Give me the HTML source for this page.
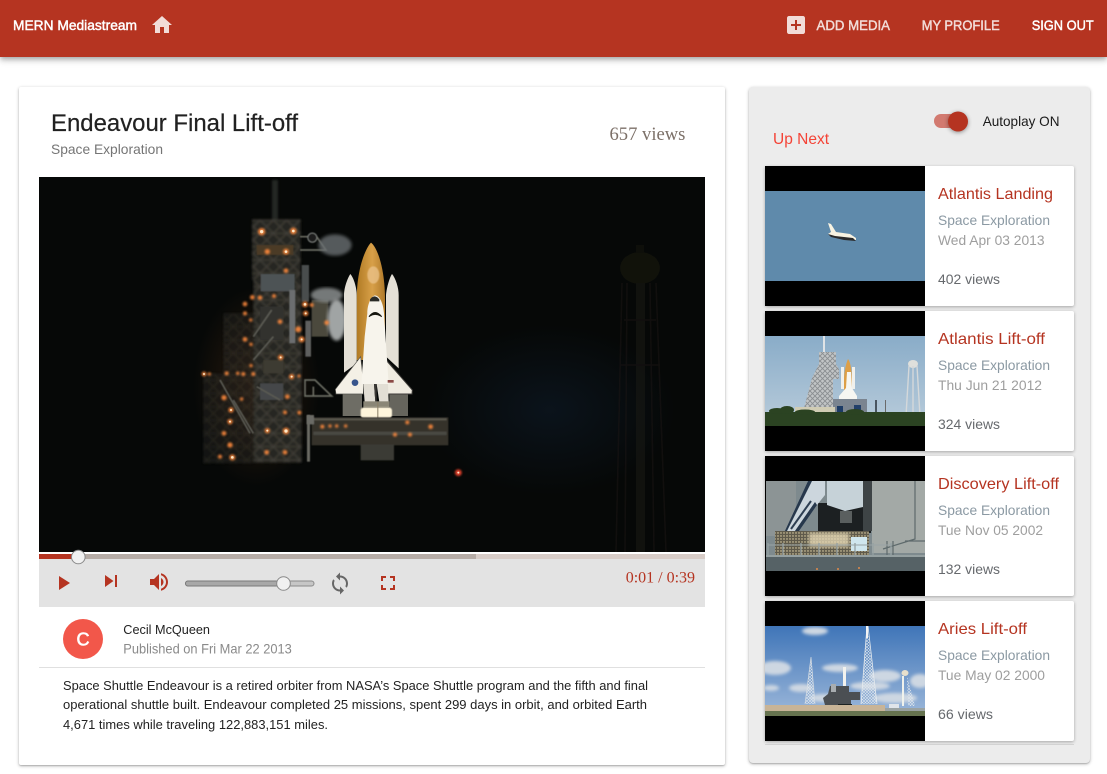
<!DOCTYPE html>
<html lang="en"><head><meta charset="utf-8"><title>MERN Mediastream</title>
<style>
html,body{margin:0;padding:0;background:#fff;width:1107px;height:774px;overflow:hidden;font-family:"Liberation Sans",sans-serif}
.a{position:absolute}
#bar{left:0;top:0;width:1107px;height:57px;background:#b53421;box-shadow:0 2px 4px -1px rgba(0,0,0,.2),0 4px 5px 0 rgba(0,0,0,.14),0 1px 10px 0 rgba(0,0,0,.12)}
#main{left:19px;top:87px;width:706px;height:678px;background:#fff;border-radius:2px;box-shadow:0 1px 3px rgba(0,0,0,.3),0 1px 1px rgba(0,0,0,.12)}
#side{left:749px;top:87px;width:341px;height:676px;background:#ececec;border-radius:4px;box-shadow:0 1px 3px rgba(0,0,0,.3),0 1px 1px rgba(0,0,0,.12)}
.card{left:765px;width:309px;height:140px;background:#fff;border-radius:2px;box-shadow:0 1px 3px rgba(0,0,0,.3)}
svg{position:absolute;left:0;top:0}
text{font-family:"Liberation Sans",sans-serif;white-space:pre}
.h{font-size:14px;font-weight:400;stroke-width:.45px;paint-order:stroke}
.tt{font-size:16px;fill:#b53421}
.s{font-size:14px;fill:#8b99a3}
.d{font-size:14px;fill:#9e9e9e}
.v{font-size:14px;fill:#66696d}
.p{font-size:13px;fill:#222}
</style></head><body>
<div class="a" id="bar"></div>
<div class="a" id="main"></div>
<div class="a" id="side"></div>
<div class="a" style="left:765px;top:744px;width:309px;height:1px;background:#d6d6d6"></div>
<div class="a card" style="top:166px"></div>
<div class="a card" style="top:311px"></div>
<div class="a card" style="top:456px"></div>
<div class="a card" style="top:601px"></div>

<svg width="1107" height="774" viewBox="0 0 1107 774" xmlns="http://www.w3.org/2000/svg">
<defs>
<filter id="b1"><feGaussianBlur stdDeviation="1.600"/></filter>
<filter id="b2"><feGaussianBlur stdDeviation="5"/></filter>
<filter id="b5"><feGaussianBlur stdDeviation="3.500"/></filter>
<filter id="b4" x="-300%" y="-300%" width="700%" height="700%"><feGaussianBlur stdDeviation="3"/></filter>
<filter id="t1"><feGaussianBlur stdDeviation=".35"/></filter>
<linearGradient id="et" x1="0" y1="0" x2="1" y2="0"><stop offset="0" stop-color="#b07a24"/><stop offset=".55" stop-color="#d8a048"/><stop offset="1" stop-color="#b07a2a"/></linearGradient>
<linearGradient id="sk2" x1="0" y1="0" x2="0" y2="1"><stop offset="0" stop-color="#89acc8"/><stop offset="1" stop-color="#b9ccdb"/></linearGradient>
<linearGradient id="sk4" x1="0" y1="0" x2="0" y2="1"><stop offset="0" stop-color="#3f75b8"/><stop offset="1" stop-color="#9db8da"/></linearGradient>
<radialGradient id="haze"><stop offset="0" stop-color="#0d1824" stop-opacity=".7"/><stop offset="1" stop-color="#0d1824" stop-opacity="0"/></radialGradient>
<radialGradient id="warm"><stop offset="0" stop-color="#4a2c14" stop-opacity=".55"/><stop offset="1" stop-color="#4a2c14" stop-opacity="0"/></radialGradient>
<pattern id="lat" width="40" height="40" patternUnits="userSpaceOnUse"><rect width="40" height="40" fill="#282723"/><path d="M0 0L40 40M40 0L0 40M0 20H40" stroke="#403e37" stroke-width="4"/></pattern>
<pattern id="lat2" width="5" height="5" patternUnits="userSpaceOnUse"><rect width="5" height="5" fill="#c2c5c6"/><path d="M0 0L5 5M5 0L0 5" stroke="#8a8e91" stroke-width=".9"/></pattern>
<pattern id="lat3" width="3" height="3" patternUnits="userSpaceOnUse"><path d="M0 0L3 3M3 0L0 3" stroke="#dfe6ee" stroke-width=".55"/></pattern>
<pattern id="sp" width="3" height="3" patternUnits="userSpaceOnUse"><rect width="3" height="3" fill="#5e5a4c"/><circle cx="1" cy="1" r=".7" fill="#ebdcae"/></pattern>
</defs>

<!-- main video -->
<svg x="39" y="177" width="666" height="375" viewBox="39 177 666 375">
<rect x="39" y="177" width="666" height="375" fill="#060807"/>
<ellipse cx="550" cy="410" rx="125" ry="85" fill="url(#haze)"/>
<!-- water tower -->
<g opacity=".5" filter="url(#t1)">
<ellipse cx="640" cy="268" rx="20" ry="16" fill="#1a1a0e"/>
<rect x="636" y="245" width="8" height="8" fill="#14140d"/>
<rect x="636" y="283" width="9" height="270" fill="#1b1b19"/>
<path d="M622 283L616 552M656 283L666 552M627 283L625 552M650 283L654 552M624 320H656M620 365H660" stroke="#1f1815" stroke-width="1.500" fill="none"/>
</g>
<g transform="translate(200 200) scale(.33333)">
<!-- pad tower -->
<ellipse cx="170" cy="560" rx="190" ry="300" fill="url(#warm)"/>
<g filter="url(#b5)">
<rect x="216" y="-60" width="18" height="120" fill="#2a2e2a" opacity=".8"/>
<rect x="156" y="58" width="146" height="180" fill="url(#lat)"/>
<rect x="160" y="238" width="145" height="550" fill="url(#lat)"/>
<rect x="10" y="520" width="150" height="270" fill="url(#lat)" opacity=".45"/>
<rect x="70" y="340" width="90" height="190" fill="url(#lat)" opacity=".45"/>
</g>
<g filter="url(#b1)">
<rect x="182" y="222" width="102" height="52" fill="#4e5254"/>
<rect x="268" y="270" width="18" height="160" fill="#6c6e70"/>
<rect x="180" y="320" width="70" height="100" fill="#33332f"/>
<rect x="180" y="550" width="70" height="50" fill="#44464a"/>
<rect x="190" y="480" width="60" height="40" fill="#3d3a30"/>
<rect x="305" y="195" width="22" height="110" fill="#4a4d4d"/>
<rect x="316" y="362" width="17" height="108" fill="#5e605e"/>
<rect x="335" y="300" width="50" height="110" fill="#4c4a3c"/>
<path d="M160 410L215 330M160 480L220 410M170 560L240 600M100 600L160 700M60 540L150 700" stroke="#5a5a52" stroke-width="5" fill="none"/>
<path d="M300 110H350L378 150H300M315 540H345L395 588H315ZM340 560V590" stroke="#6a6c62" stroke-width="5" fill="none"/>
<rect x="170" y="135" width="110" height="30" fill="#4c3a26"/>
<rect x="321" y="645" width="9" height="140" fill="#6a6a64"/>
<circle cx="337" cy="113" r="14" fill="#1b1d1c" stroke="#7c7f7c" stroke-width="3"/>
</g>
<!-- smoke -->
<ellipse cx="405" cy="135" rx="50" ry="32" fill="#6a6f72" filter="url(#b2)" opacity=".8"/>
<ellipse cx="380" cy="285" rx="48" ry="22" fill="#8a8e8e" filter="url(#b2)" opacity=".85"/>
<ellipse cx="410" cy="360" rx="28" ry="62" fill="#b2b6b6" filter="url(#b2)" opacity=".9"/>
<!-- shuttle -->
<g filter="url(#t1)">
<path d="M470 300C470 200 500 140 513 128C530 140 555 200 555 300V480H470Z" fill="url(#et)"/>
<ellipse cx="520" cy="225" rx="18" ry="26" fill="#ecc48c" opacity=".75" filter="url(#b1)"/>
<path d="M432 285C432 260 445 230 451 222C460 232 470 260 470 285V490L432 518Z" fill="#e4e0d6"/>
<path d="M558 285C560 260 570 230 576 222C585 232 596 260 596 285V505L558 470Z" fill="#e4e0d6"/>
<rect x="428" y="578" width="58" height="70" fill="#6e6d65"/>
<rect x="568" y="578" width="56" height="70" fill="#66655d"/>
<path d="M482 470L406 568L408 582H490V545Z" fill="#f4f0e6" stroke="#55544f" stroke-width="2"/>
<path d="M558 480L637 570L636 582H556V545Z" fill="#efebe0" stroke="#3f3e3a" stroke-width="3"/>
<path d="M502 340C502 310 515 288 525 286C540 288 550 310 552 340L566 552H484L494 410Z" fill="#f7f4ec"/>
<path d="M510 298Q523 280 538 298L538 304H510Z" fill="#2c2c28"/>
<path d="M507 350Q525 325 545 350L542 348Q525 338 510 348Z" fill="#15130f" stroke="#15130f" stroke-width="3"/>
<circle cx="465" cy="548" r="10" fill="#37558c"/>
<rect x="563" y="540" width="18" height="8" fill="#8b4a44"/>
<path d="M490 552H522L526 606H494ZM530 552H564L566 606H538Z" fill="#e2ded4"/>
<path d="M522 552H530V606H526Z" fill="#3a3934"/>
<rect x="490" y="604" width="78" height="18" fill="#8a8676"/>
<rect x="482" y="622" width="94" height="33" rx="10" fill="#fff6dc" filter="url(#b1)"/>
<rect x="532" y="606" width="3" height="48" fill="#8a7f66"/>
</g>
<!-- platform -->
<g filter="url(#b1)">
<rect x="335" y="652" width="410" height="84" fill="#34322c"/>
<rect x="335" y="655" width="405" height="6" fill="#5a584e"/>
<rect x="340" y="695" width="400" height="10" fill="#4a4942"/>
<rect x="482" y="733" width="100" height="48" fill="#3a3b34"/>
<rect x="320" y="645" width="22" height="28" fill="#6a6a65"/>
</g>
<!-- lights -->
<g fill="#ff8a3c" filter="url(#b4)" opacity=".9">
<circle cx="185" cy="95" r="11"/><circle cx="280" cy="93" r="10"/><circle cx="202" cy="155" r="8"/><circle cx="258" cy="155" r="9"/><circle cx="258" cy="212" r="7"/><circle cx="157" cy="292" r="7"/><circle cx="180" cy="293" r="7"/><circle cx="222" cy="288" r="6"/><circle cx="135" cy="312" r="7"/><circle cx="135" cy="340" r="6"/><circle cx="152" cy="360" r="5"/><circle cx="240" cy="365" r="7"/><circle cx="315" cy="313" r="9"/><circle cx="335" cy="315" r="6"/><circle cx="317" cy="340" r="8"/><circle cx="295" cy="388" r="9"/><circle cx="135" cy="418" r="7"/><circle cx="305" cy="418" r="9"/><circle cx="153" cy="433" r="5"/><circle cx="242" cy="472" r="8"/><circle cx="153" cy="497" r="5"/><circle cx="12" cy="522" r="7"/><circle cx="28" cy="522" r="5"/><circle cx="80" cy="520" r="6"/><circle cx="113" cy="520" r="5"/><circle cx="130" cy="522" r="6"/><circle cx="160" cy="522" r="6"/><circle cx="275" cy="530" r="8"/><circle cx="297" cy="528" r="5"/><circle cx="72" cy="593" r="8"/><circle cx="125" cy="597" r="5"/><circle cx="262" cy="590" r="7"/><circle cx="93" cy="630" r="8"/><circle cx="255" cy="637" r="6"/><circle cx="298" cy="638" r="6"/><circle cx="90" cy="665" r="8"/><circle cx="72" cy="700" r="7"/><circle cx="202" cy="692" r="8"/><circle cx="258" cy="693" r="10"/><circle cx="90" cy="735" r="8"/><circle cx="60" cy="770" r="6"/><circle cx="97" cy="772" r="9"/><circle cx="200" cy="757" r="7"/><circle cx="255" cy="757" r="7"/><circle cx="367" cy="680" r="6"/><circle cx="390" cy="678" r="5"/><circle cx="410" cy="678" r="5"/><circle cx="437" cy="678" r="5"/><circle cx="622" cy="667" r="6"/><circle cx="692" cy="680" r="7"/><circle cx="585" cy="704" r="6"/><circle cx="630" cy="704" r="6"/><circle cx="775" cy="818" r="10" fill="#ff4a30"/><circle cx="380" cy="368" r="7"/>
</g>
<g fill="#ffe9c8">
<circle cx="185" cy="95" r="5"/><circle cx="280" cy="93" r="4"/><circle cx="258" cy="155" r="4"/><circle cx="315" cy="313" r="4"/><circle cx="317" cy="340" r="3"/><circle cx="305" cy="418" r="3"/><circle cx="258" cy="693" r="5"/><circle cx="97" cy="772" r="4"/><circle cx="202" cy="692" r="3"/><circle cx="93" cy="630" r="3"/><circle cx="90" cy="665" r="3"/><circle cx="275" cy="530" r="3"/><circle cx="242" cy="472" r="3"/><circle cx="12" cy="522" r="3"/><circle cx="775" cy="818" r="3"/>
</g>
</g>
</svg>

<!-- thumb 1 -->
<rect x="765" y="166" width="160" height="140" fill="#000"/>
<svg x="765" y="191" width="160" height="90" viewBox="0 0 160 90">
<rect width="160" height="90" fill="#5f8aab"/>
<g filter="url(#t1)">
<path d="M63 32L66 33L71 41L85 43L91 47L91 49L79 48L66 45L63 43L66 41Z" fill="#f8f3e2"/>
<path d="M63 43L66 46L79 49L91 50L88 47L70 45Z" fill="#2a2a2c"/>
</g>
</svg>
<!-- thumb 2 -->
<rect x="765" y="311" width="160" height="140" fill="#000"/>
<svg x="765" y="336" width="160" height="90" viewBox="0 0 160 90">
<rect width="160" height="90" fill="url(#sk2)"/>
<g filter="url(#t1)">
<rect x="58" y="0" width="2" height="16" fill="#dfe3e6"/>
<path d="M54 16H71V28L74 33V43H68V76H38L47 42L54 28Z" fill="url(#lat2)"/>
<path d="M79 44C79 34 82 25 83 23C85 25 87 34 87 44V56H79Z" fill="#dd9f47"/>
<rect x="76" y="31" width="3" height="22" fill="#f0f0ec"/><rect x="87" y="31" width="3" height="22" fill="#f0f0ec"/>
<path d="M82 36H86L87 52L92 60V64H74V60L81 52Z" fill="#f6f6f2"/>
<rect x="68" y="63" width="34" height="13" fill="#7a8490"/>
<rect x="72" y="70" width="6" height="6" fill="#1e3a66"/><rect x="89" y="69" width="7" height="7" fill="#23416a"/>
<ellipse cx="148" cy="28" rx="5" ry="4" fill="#dfe0dc"/>
<path d="M144 30L141 80M152 30L155 80M148 30V80" stroke="#d4d8da" stroke-width="1.400" fill="none"/>
<rect x="110" y="64" width="2" height="12" fill="#4a5460"/><rect x="120" y="64" width="1" height="12" fill="#6a6a6a"/>
</g>
<path d="M30 71H70V76H30ZM104 76H130V79H104Z" fill="#d0ccb4"/>
<g fill="#2b4322">
<rect y="76" width="160" height="14"/>
<ellipse cx="12" cy="75" rx="8" ry="3"/><ellipse cx="22" cy="74" rx="7" ry="4"/><ellipse cx="40" cy="76" rx="10" ry="2.500"/><ellipse cx="90" cy="76" rx="9" ry="3"/><ellipse cx="140" cy="78" rx="14" ry="2"/>
</g>
</svg>
<!-- thumb 3 -->
<rect x="765" y="456" width="160" height="140" fill="#000"/>
<svg x="765" y="481" width="160" height="90" viewBox="0 0 160 90">
<rect x="1" width="159" height="90" fill="#7e8a8e"/>
<rect x="1" width="30" height="55" fill="#8c9495"/>
<path d="M107 0H160V72H107Z" fill="#a3a9a6"/>
<path d="M53 22H106V52H53Z" fill="#1c2022"/>
<path d="M62 0H98V26L80 30L62 24Z" fill="#c6d2d8"/>
<rect x="75" y="30" width="12" height="12" fill="#5a5f5f"/>
<path d="M98 0H107V50H98Z" fill="#3e4446"/>
<path d="M43 0H60V14L52 24L23 66L18 54Z" fill="#ccd6dd"/>
<path d="M43 0L18 54L23 66L52 24L50 21L23 60L21 52L47 0Z" fill="#27384c"/>
<path d="M26 48L46 20" stroke="#2d3e52" stroke-width="2"/>
<path d="M10 50H104V76H10Z" fill="url(#sp)" filter="url(#t1)"/>
<path d="M44 52H84V66H44Z" fill="#e6d9b6" opacity=".75" filter="url(#b1)"/>
<rect x="86" y="56" width="16" height="14" fill="#cfe6ee"/>
<path d="M150 0V58L118 68M140 60H160M122 60V74M128 60V74" stroke="#5e6a6c" stroke-width="1.200" fill="none"/>
<rect x="1" y="74" width="159" height="16" fill="#566266"/>
<rect x="1" y="74" width="159" height="2" fill="#95a0a1"/>
<path d="M3 62V76M18 62V76M36 62V76M54 62V76M72 62V76M90 62V76M108 62V76M126 62V76" stroke="#94a0a2" stroke-width="1.300"/>
<path d="M3 64H125" stroke="#9aa4a6"/>
<circle cx="52" cy="88" r="1" fill="#e08a4a"/><circle cx="73" cy="88" r="1" fill="#e08a4a"/><circle cx="94" cy="87" r="1" fill="#e08a4a"/>
</svg>
<!-- thumb 4 -->
<rect x="765" y="601" width="160" height="140" fill="#000"/>
<svg x="765" y="626" width="160" height="90" viewBox="0 0 160 90">
<rect width="160" height="90" fill="url(#sk4)"/>
<g filter="url(#b1)" fill="#cdd7e2">
<ellipse cx="50" cy="5" rx="13" ry="4"/><ellipse cx="10" cy="42" rx="16" ry="7"/><ellipse cx="36" cy="62" rx="12" ry="4"/><ellipse cx="75" cy="42" rx="18" ry="4"/><ellipse cx="120" cy="50" rx="16" ry="6"/><ellipse cx="155" cy="55" rx="10" ry="7"/><ellipse cx="105" cy="60" rx="20" ry="4"/><ellipse cx="6" cy="62" rx="8" ry="3"/><ellipse cx="60" cy="72" rx="16" ry="4"/><ellipse cx="130" cy="72" rx="22" ry="5"/>
</g>
<g filter="url(#t1)">
<path d="M102 0L96 78H112Z" fill="url(#lat3)"/>
<path d="M102 0L96 78M103 0L112 78" stroke="#e6ebef" stroke-width=".8"/>
<rect x="101" y="0" width="2" height="12" fill="#f2f3f4"/>
<path d="M46 31L40 78H50Z" fill="url(#lat3)"/>
<path d="M46 31L40 78M46 31L50 78" stroke="#d6dce2" stroke-width=".7"/>
<rect x="78" y="41" width="3" height="24" fill="#f2f2ee"/>
<path d="M65 60H84V66H95V74H86V79H60L58 72L63 68Z" fill="#4c5052"/>
<rect x="66" y="58" width="5" height="8" fill="#a8adb0"/>
<ellipse cx="140" cy="47" rx="3.500" ry="3" fill="#e8e0cc"/>
<rect x="137" y="50" width="2" height="30" fill="#f0f2ec"/>
<path d="M142 50L150 80H143Z" fill="url(#lat3)"/>
<rect x="73" y="78" width="14" height="6" fill="#1c2024"/>
<rect x="124" y="78" width="10" height="6" fill="#dfe4ea"/>
</g>
<rect y="79" width="120" height="6" fill="#c8b497"/>
<rect y="85" width="160" height="5" fill="#66734f"/>
<rect x="120" y="82" width="40" height="3" fill="#9aa2a2"/>
</svg>

<!-- header icons -->
<path transform="translate(150 13)" fill="#f2dcd8" d="M10 20v-6h4v6h5v-8h3L12 3 2 12h3v8z"/>
<path transform="translate(784 13)" fill="#f2dcd8" d="M19 3H5c-1.110 0-2 .9-2 2v14c0 1.100.89 2 2 2h14c1.100 0 2-.9 2-2V5c0-1.100-.9-2-2-2zm-2 10h-4v4h-2v-4H7v-2h4V7h2v4h4v2z"/>

<!-- header text -->
<text x="13" y="30" class="h" fill="#fff" stroke="#fff" textLength="124" lengthAdjust="spacingAndGlyphs">MERN Mediastream</text>
<text x="816.500" y="30" class="h" fill="#f2dcd8" stroke="#f2dcd8" textLength="73.500" lengthAdjust="spacingAndGlyphs">ADD MEDIA</text>
<text x="921.700" y="30" class="h" fill="#f2dcd8" stroke="#f2dcd8" textLength="78" lengthAdjust="spacingAndGlyphs">MY PROFILE</text>
<text x="1031.700" y="30" class="h" fill="#fff" stroke="#fff" textLength="62" lengthAdjust="spacingAndGlyphs">SIGN OUT</text>

<!-- main text -->
<text x="51" y="131" font-size="24" fill="#212121" stroke="#212121" stroke-width=".2" textLength="247" lengthAdjust="spacingAndGlyphs">Endeavour Final Lift-off</text>
<text x="51" y="154" font-size="14" fill="#757575" textLength="112" lengthAdjust="spacingAndGlyphs">Space Exploration</text>
<text x="609.500" y="140" font-size="18.600" fill="#7c7068" style="font-family:'Liberation Serif',serif">657 views</text>

<!-- controls -->
<rect x="39" y="552" width="666" height="55" fill="#e3e3e3"/>
<rect x="39" y="552" width="666" height="2" fill="#fff"/>
<rect x="39" y="554" width="666" height="5" fill="#d8cdc8"/>
<rect x="39" y="554" width="437" height="5" fill="#b6aca6"/>
<rect x="39" y="554" width="39" height="5" fill="#b53421"/>
<circle cx="78.300" cy="557" r="6.800" fill="#f1f1f1" stroke="#8a8a8a" stroke-width="1"/>
<path transform="translate(51 571)" fill="#b53421" d="M8 5v14l11-7z"/>
<path transform="translate(99 569)" fill="#b53421" d="M6 18l8.500-6L6 6v12zM16 6v12h2V6h-2z"/>
<path transform="translate(147 570)" fill="#b53421" d="M3 9v6h4l5 5V4L7 9H3zm13.500 3c0-1.770-1.020-3.290-2.500-4.030v8.050c1.480-.73 2.500-2.250 2.500-4.020zM14 3.230v2.060c2.890.86 5 3.540 5 6.710s-2.110 5.850-5 6.710v2.060c4.010-.91 7-4.490 7-8.770s-2.990-7.860-7-8.770z"/>
<rect x="185.500" y="581" width="128.500" height="5" rx="2.500" fill="#c6c6c6" stroke="#8a8a8a" stroke-width="1"/>
<rect x="185.500" y="581" width="98" height="5" rx="2.500" fill="#a8a8a8" stroke="#7a7a7a" stroke-width="1"/>
<circle cx="283.500" cy="583.500" r="6.800" fill="#f1f1f1" stroke="#8a8a8a" stroke-width="1"/>
<path transform="translate(328 571.500)" fill="#666" d="M12 4V1L8 5l4 4V6c3.310 0 6 2.690 6 6 0 1.010-.25 1.970-.7 2.800l1.460 1.460C19.540 15.030 20 13.570 20 12c0-4.420-3.580-8-8-8zm0 14c-3.310 0-6-2.690-6-6 0-1.010.25-1.970.7-2.800L5.240 7.740C4.460 8.970 4 10.430 4 12c0 4.420 3.580 8 8 8v3l4-4-4-4v3z"/>
<path transform="translate(376 571)" fill="#b53421" d="M7 14H5v5h5v-2H7v-3zm-2-4h2V7h3V5H5v5zm12 7h-3v2h5v-5h-2v3zM14 5v2h3v3h2V5h-5z"/>
<text x="625.700" y="582.700" font-size="16" fill="#b53421" style="font-family:'Liberation Serif',serif">0:01 / 0:39</text>

<!-- author -->
<circle cx="83" cy="639" r="20" fill="#f2574a"/>
<text x="83" y="645.500" font-size="18" fill="#fff" text-anchor="middle" stroke="#fff" stroke-width=".6">C</text>
<text x="123.300" y="634" class="p" textLength="86.700" lengthAdjust="spacingAndGlyphs">Cecil McQueen</text>
<text x="123.300" y="653.300" font-size="14" fill="#8a8a8a" textLength="168.500" lengthAdjust="spacingAndGlyphs">Published on Fri Mar 22 2013</text>
<rect x="39" y="667" width="666" height="1" fill="#e0e0e0"/>
<text x="63" y="690" class="p" textLength="585" lengthAdjust="spacingAndGlyphs">Space Shuttle Endeavour is a retired orbiter from NASA’s Space Shuttle program and the fifth and final</text>
<text x="63" y="709" class="p" textLength="584" lengthAdjust="spacingAndGlyphs">operational shuttle built. Endeavour completed 25 missions, spent 299 days in orbit, and orbited Earth</text>
<text x="63" y="729" class="p" textLength="265" lengthAdjust="spacingAndGlyphs">4,671 times while traveling 122,883,151 miles.</text>

<!-- side -->
<text x="773" y="144" font-size="16" fill="#f44336" textLength="56" lengthAdjust="spacingAndGlyphs">Up Next</text>
<rect x="934" y="114" width="30" height="14" rx="7" fill="#d27a70"/>
<circle cx="958" cy="121.500" r="10" fill="#b53421" style="filter:drop-shadow(0 1px 2px rgba(0,0,0,.4))"/>
<text x="982.700" y="126" font-size="14" fill="#1a1a1a" textLength="76.800" lengthAdjust="spacingAndGlyphs">Autoplay ON</text>

<text x="938" y="199" class="tt" textLength="115" lengthAdjust="spacingAndGlyphs">Atlantis Landing</text>
<text x="938" y="225" class="s" textLength="112" lengthAdjust="spacingAndGlyphs">Space Exploration</text>
<text x="938" y="245" class="d" textLength="106.500" lengthAdjust="spacingAndGlyphs">Wed Apr 03 2013</text>
<text x="938" y="284" class="v" textLength="62" lengthAdjust="spacingAndGlyphs">402 views</text>

<text x="938" y="344" class="tt" textLength="107" lengthAdjust="spacingAndGlyphs">Atlantis Lift-off</text>
<text x="938" y="370" class="s" textLength="112" lengthAdjust="spacingAndGlyphs">Space Exploration</text>
<text x="938" y="390" class="d" textLength="104" lengthAdjust="spacingAndGlyphs">Thu Jun 21 2012</text>
<text x="938" y="429" class="v" textLength="62" lengthAdjust="spacingAndGlyphs">324 views</text>

<text x="938" y="489" class="tt" textLength="121" lengthAdjust="spacingAndGlyphs">Discovery Lift-off</text>
<text x="938" y="515" class="s" textLength="112" lengthAdjust="spacingAndGlyphs">Space Exploration</text>
<text x="938" y="535" class="d" textLength="105" lengthAdjust="spacingAndGlyphs">Tue Nov 05 2002</text>
<text x="938" y="574" class="v" textLength="62" lengthAdjust="spacingAndGlyphs">132 views</text>

<text x="938" y="634" class="tt" textLength="89" lengthAdjust="spacingAndGlyphs">Aries Lift-off</text>
<text x="938" y="660" class="s" textLength="112" lengthAdjust="spacingAndGlyphs">Space Exploration</text>
<text x="938" y="680" class="d" textLength="107" lengthAdjust="spacingAndGlyphs">Tue May 02 2000</text>
<text x="938" y="719" class="v" textLength="55" lengthAdjust="spacingAndGlyphs">66 views</text>
</svg>
</body></html>
